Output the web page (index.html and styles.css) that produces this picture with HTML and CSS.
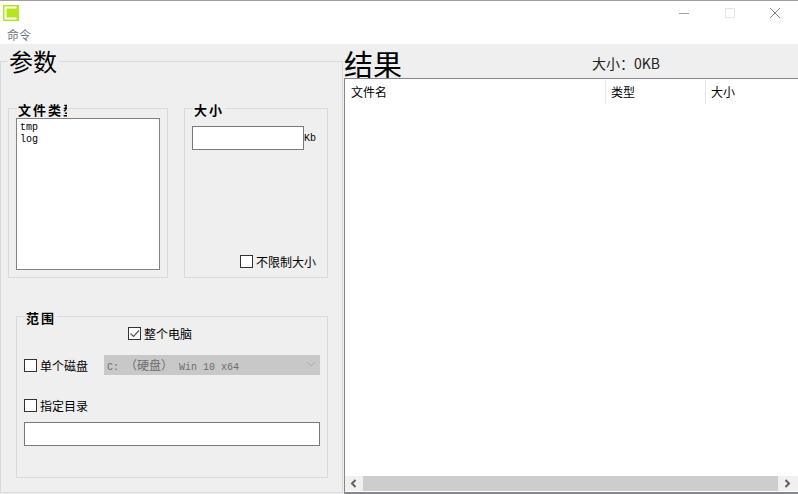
FILE: index.html
```html
<!DOCTYPE html>
<html lang="zh-CN">
<head>
    <meta charset="UTF-8">
    <meta name="viewport" content="width=device-width, initial-scale=1.0">
    <title>清理</title>
    <link rel="stylesheet" href="styles.css">
</head>
<body>
    <div class="window">
        <div class="titlebar">
            <svg class="app-icon" width="16" height="16" viewBox="0 0 16 16">
                <rect width="16" height="16" fill="#b5e61d"/>
                <path d="M1.5 1.5H13.5V3.5H3.5V12.5H13.5V14.5H1.5Z" fill="#fff"/>
            </svg>
            <div class="window-buttons">
                <svg width="12" height="12" viewBox="0 0 12 12"><path d="M1 6.5H11" stroke="#a0a0a0"/></svg>
                <svg width="12" height="12" viewBox="0 0 12 12"><rect x="1.5" y="1.5" width="9" height="9" fill="none" stroke="#e4e4e4"/></svg>
                <svg width="12" height="12" viewBox="0 0 12 12"><path d="M1 1L11 11M11 1L1 11" stroke="#888"/></svg>
            </div>
        </div>
        <div class="menubar">命令</div>

        <div class="main">
            <fieldset class="params">
                <legend class="big-legend">参数</legend>
                <div class="top-groups">
                    <fieldset class="group types">
                        <legend class="clipped">文件类型</legend>
                        <div class="listbox">
                            <div>tmp</div>
                            <div>log</div>
                        </div>
                    </fieldset>
                    <fieldset class="group size">
                        <legend>大小</legend>
                        <div class="size-row">
                            <div class="textbox size-box"></div>
                            <span class="mono">Kb</span>
                        </div>
                        <label class="check no-limit"><span class="box"></span>不限制大小</label>
                    </fieldset>
                </div>
                <fieldset class="group range">
                    <legend>范围</legend>
                    <label class="check whole">
                        <span class="box">
                            <svg width="11" height="11" viewBox="0 0 11 11"><path d="M1.5 5.5L4.5 8.5L10 2.5" fill="none" stroke="#555" stroke-width="1.2"/></svg>
                        </span>整个电脑
                    </label>
                    <div class="disk-row">
                        <label class="check"><span class="box"></span>单个磁盘</label>
                        <div class="select">
                            <span>C: <span class="cjk">（硬盘）</span> Win 10 x64</span>
                            <svg width="10" height="6" viewBox="0 0 10 6"><path d="M1 1L5 5L9 1" fill="none" stroke="#aaa"/></svg>
                        </div>
                    </div>
                    <label class="check dir"><span class="box"></span>指定目录</label>
                    <div class="textbox dir-box"></div>
                </fieldset>
            </fieldset>

            <div class="results">
                <div class="results-head">
                    <span class="results-title">结果</span>
                    <span class="total">大小：0KB</span>
                </div>
                <div class="table">
                    <div class="table-head">
                        <div class="col col-name">文件名</div>
                        <div class="col col-type">类型</div>
                        <div class="col col-size">大小</div>
                    </div>
                    <div class="table-body"></div>
                    <div class="scrollbar">
                        <svg width="18" height="15" viewBox="0 0 18 15"><path d="M10.5 4L7 7.5L10.5 11" fill="none" stroke="#606060" stroke-width="2"/></svg>
                        <div class="thumb"></div>
                        <svg width="18" height="15" viewBox="0 0 18 15"><path d="M7.5 4L11 7.5L7.5 11" fill="none" stroke="#606060" stroke-width="2"/></svg>
                    </div>
                </div>
            </div>
        </div>
    </div>
</body>
</html>
```

FILE: styles.css
```css
* {
    box-sizing: border-box;
}
html, body {
    margin: 0;
    height: 100%;
    overflow: hidden;
}
body {
    font-family: "Noto Sans CJK SC", "Liberation Sans", sans-serif;
    font-size: 12px;
    color: #000;
    background-color: #fff;
}
.window {
    display: flex;
    flex-direction: column;
    height: 494px;
    border-top: 1px solid #a0a0a0;
}
.titlebar {
    display: flex;
    justify-content: space-between;
    height: 27px;
    padding: 4px 0 0 3px;
}
.window-buttons {
    display: flex;
    gap: 33.5px;
    padding: 2px 17px 0 0;
}
.window-buttons svg {
    display: block;
}
.menubar {
    height: 16px;
    padding-left: 7px;
    line-height: 14px;
    color: #6a7683;
}
.main {
    display: flex;
    flex: 1;
    background-color: #efefef;
}

fieldset {
    margin: 0;
    padding: 0;
    min-width: 0;
    border: 1px solid #dadada;
}
legend {
    padding: 0;
    font-weight: 700;
    line-height: 14px;
}
.params {
    flex: none;
    width: 343px;
    height: 449px;
    margin-right: 1px;
    padding: 21px 0 0 7px;
}
.big-legend {
    margin-left: 0;
    padding: 0 2px 0 1px;
    font-size: 24px;
    font-weight: 400;
    line-height: 34px;
}
.top-groups {
    display: flex;
    gap: 16px;
}
.group legend {
    margin-left: 1px;
    padding: 4px 1px 0;
    font-size: 13px;
    letter-spacing: 2px;
}
.types {
    width: 160px;
    height: 179px;
    padding: 1px 0 0 7px;
}
.group .clipped {
    width: 50px;
    height: 18px;
    overflow: hidden;
    white-space: nowrap;
}
.listbox {
    width: 144px;
    height: 152px;
    padding: 3px;
    border: 1px solid #828282;
    background-color: #fff;
    font-family: "Liberation Mono", monospace;
    font-size: 10px;
    line-height: 12px;
}
.size {
    display: flex;
    flex-direction: column;
    width: 144px;
    height: 179px;
    padding: 9px 0 8px 7px;
}
.size-row {
    display: flex;
    align-items: center;
}
.textbox {
    border: 1px solid #7a7a7a;
    background-color: #fff;
}
.size-box {
    flex: none;
    width: 112px;
    height: 24px;
}
.mono {
    font-family: "Liberation Mono", monospace;
    font-size: 10px;
    color: #000;
}
.check {
    display: flex;
    align-items: center;
    height: 16px;
    gap: 3px;
    font-size: 12px;
    white-space: nowrap;
}
.box {
    display: flex;
    align-items: center;
    justify-content: center;
    flex: none;
    width: 13px;
    height: 13px;
    border: 1px solid #333;
    background-color: #fff;
}
.no-limit {
    margin-top: auto;
    margin-left: 48px;
}
.range {
    width: 312px;
    height: 171px;
    margin: 29px 0 0 8px;
    padding: 0 7px;
}
.whole {
    margin-left: 104px;
}
.disk-row {
    display: flex;
    align-items: center;
    height: 20px;
    margin-top: 14px;
    gap: 16px;
}
.select {
    display: flex;
    align-items: center;
    justify-content: space-between;
    width: 216px;
    height: 20px;
    padding: 0 4px 2px 3px;
    background-color: #c8c8c8;
    font-family: "Liberation Mono", "Noto Sans CJK SC", monospace;
    font-size: 10px;
    color: #6d6d6d;
}
.cjk {
    font-family: "Noto Sans CJK SC", sans-serif;
    font-size: 12px;
}
.dir {
    margin-top: 22px;
}
.dir-box {
    width: 296px;
    height: 24px;
    margin-top: 9px;
}

.results {
    display: flex;
    flex: 1;
    flex-direction: column;
    min-width: 0;
}
.results-head {
    display: flex;
    height: 33px;
    margin-bottom: 1px;
}
.results-title {
    font-size: 29px;
    line-height: 38px;
}
.total {
    margin: 10px 0 0 190px;
    font-size: 14px;
    line-height: 18px;
    color: #222;
}
.table {
    display: flex;
    flex-direction: column;
    height: 416px;
    border: 1px solid #828790;
    border-width: 1px 0 2px 1px;
    background-color: #fff;
}
.table-head {
    display: flex;
    height: 25px;
    padding-top: 1px;
}
.col {
    height: 24px;
    padding-left: 5px;
    border-right: 1px solid #e5e5e5;
    line-height: 24px;
}
.col-name {
    width: 261px;
    padding-left: 6px;
}
.col-type {
    width: 100px;
}
.col-size {
    flex: 1;
    border-right: 0;
}
.table-body {
    flex: 1;
}
.scrollbar {
    display: flex;
    align-items: center;
    height: 15px;
    margin-bottom: 1px;
    background-color: #f0f0f0;
}
.scrollbar svg {
    flex: none;
}
.thumb {
    width: 415px;
    height: 15px;
    background-color: #cdcdcd;
}
```
